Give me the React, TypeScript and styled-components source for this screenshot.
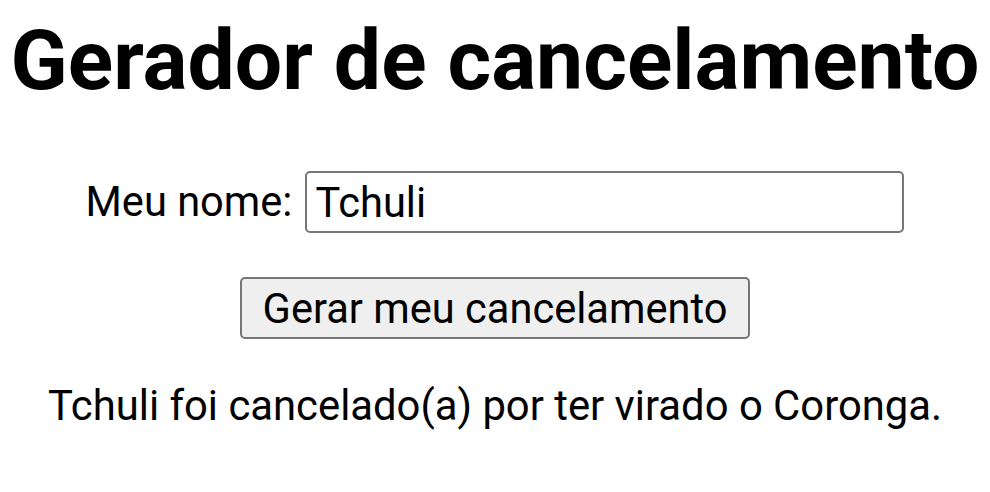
import React, { useState } from 'react';
import styled, { createGlobalStyle } from 'styled-components';

const GlobalStyle = createGlobalStyle`
  html, body {
    margin: 0;
    padding: 0;
    background: #fff;
  }
  body {
    font-family: Roboto, "Liberation Sans", Arial, sans-serif;
    color: #000;
  }
`;

const Page = styled.main`
  display: flex;
  flex-direction: column;
  align-items: center;
  padding-top: 19px;
`;

const Title = styled.h1`
  margin: 0;
  font-size: 84px;
  line-height: 84px;
  font-weight: 700;
  white-space: nowrap;
`;

const NameRow = styled.label`
  display: flex;
  align-items: center;
  gap: 13px;
  margin-top: 68px;
  font-size: 41.6px;
  line-height: 50px;
`;

const NameInput = styled.input`
  box-sizing: border-box;
  width: 599px;
  height: 62px;
  padding: 0 8px;
  border: 2px solid #767676;
  border-radius: 5px;
  font-family: inherit;
  font-size: 41.6px;
  color: #000;
  background: #fff;
  outline: none;
`;

const GenerateButton = styled.button`
  box-sizing: border-box;
  margin-top: 44px;
  height: 62px;
  padding: 0 21px;
  border: 2px solid #767676;
  border-radius: 5px;
  background: #efefef;
  font-family: inherit;
  font-size: 41.6px;
  color: #000;
  cursor: pointer;
`;

const Result = styled.p`
  margin: 42px 0 0;
  font-size: 41.8px;
  line-height: 50px;
  white-space: nowrap;
`;

const reasons = ['ter virado o Coronga'];

const App = () => {
  const [name, setName] = useState('Tchuli');
  const [shown, setShown] = useState('Tchuli');

  return (
    <>
      <GlobalStyle />
      <Page>
        <Title>Gerador de cancelamento</Title>
        <NameRow>
          Meu nome:
          <NameInput value={name} onChange={(e) => setName(e.target.value)} />
        </NameRow>
        <GenerateButton onClick={() => setShown(name)}>Gerar meu cancelamento</GenerateButton>
        <Result>{shown} foi cancelado(a) por {reasons[0]}.</Result>
      </Page>
    </>
  );
};

export default App;
